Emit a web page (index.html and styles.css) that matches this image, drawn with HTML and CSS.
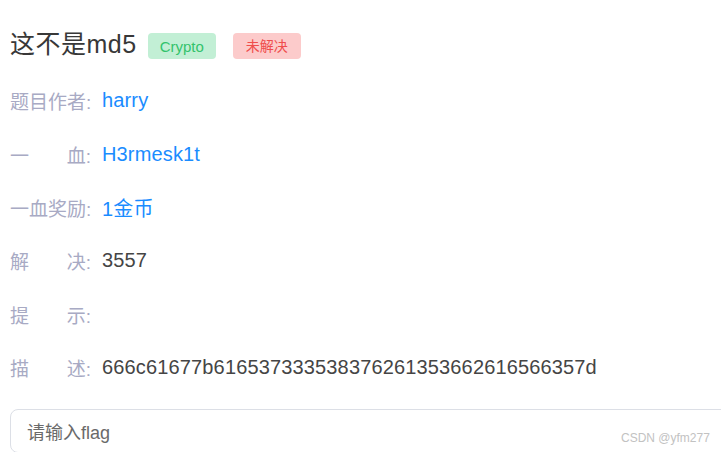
FILE: index.html
```html
<!DOCTYPE html>
<html lang="zh-CN">
<head>
<meta charset="utf-8">
<title>这不是md5</title>
<link rel="stylesheet" href="styles.css">
</head>
<body>
<div class="page">
  <div class="header">
    <h1 class="title">这不是md5</h1>
    <span class="badge badge-green">Crypto</span>
    <span class="badge badge-red">未解决</span>
  </div>
  <div class="info">
    <div class="row">
      <div class="label"><span>题目作者:</span></div>
      <div class="value link">harry</div>
    </div>
    <div class="row">
      <div class="label"><span>一</span><span>血:</span></div>
      <div class="value link">H3rmesk1t</div>
    </div>
    <div class="row">
      <div class="label"><span>一血奖励:</span></div>
      <div class="value link">1金币</div>
    </div>
    <div class="row">
      <div class="label"><span>解</span><span>决:</span></div>
      <div class="value">3557</div>
    </div>
    <div class="row">
      <div class="label"><span>提</span><span>示:</span></div>
      <div class="value"></div>
    </div>
    <div class="row">
      <div class="label"><span>描</span><span>述:</span></div>
      <div class="value">666c61677b616537333538376261353662616566357d</div>
    </div>
  </div>
  <div class="flag-input">请输入flag</div>
</div>
<div class="watermark">CSDN @yfm277</div>
</body>
</html>
```

FILE: styles.css
```css
html, body {
  margin: 0;
  padding: 0;
  background: #ffffff;
  overflow: hidden;
}
body {
  width: 721px;
  height: 452px;
  position: relative;
  font-family: "Liberation Sans", "Noto Sans CJK SC", sans-serif;
}
.page {
  padding: 32px 0 0 10px;
  overflow: hidden;
}
.header {
  display: flex;
  align-items: center;
  height: 28px;
}
.title {
  margin: 0;
  font-size: 25px;
  font-weight: normal;
  color: #383838;
  letter-spacing: 0.5px;
  line-height: 28px;
  position: relative;
  top: -2px;
}
.badge {
  display: inline-flex;
  align-items: center;
  justify-content: center;
  height: 26px;
  padding: 0 13px;
  border-radius: 4px;
  font-size: 14px;
  line-height: 1;
}
.badge-green {
  margin-left: 11px;
  background: #c2efd5;
  color: #33c36c;
  font-size: 15px;
  padding: 0 12px;
}
.badge-red {
  margin-left: 17px;
  background: #fccbcb;
  color: #ef4d4d;
}
.info {
  margin-top: 14px;
  display: grid;
  grid-auto-rows: 53.4px;
}
.row {
  display: flex;
  align-items: center;
}
.label {
  width: 81px;
  display: flex;
  justify-content: space-between;
  font-size: 19px;
  color: #a8aac4;
  white-space: nowrap;
}
.value {
  margin-left: 11px;
  font-size: 20px;
  letter-spacing: 0.15px;
  color: #454545;
  white-space: nowrap;
}
.link {
  color: #1a8cff;
}
.flag-input {
  margin-top: 15px;
  width: 740px;
  height: 44px;
  box-sizing: border-box;
  border: 1px solid #dcdfe6;
  border-radius: 8px;
  padding-left: 16px;
  display: flex;
  align-items: center;
  font-size: 18px;
  color: #6a6a6a;
}
.watermark {
  position: absolute;
  left: 621px;
  top: 431px;
  font-size: 12px;
  color: #c2c2c2;
  white-space: nowrap;
}
```
